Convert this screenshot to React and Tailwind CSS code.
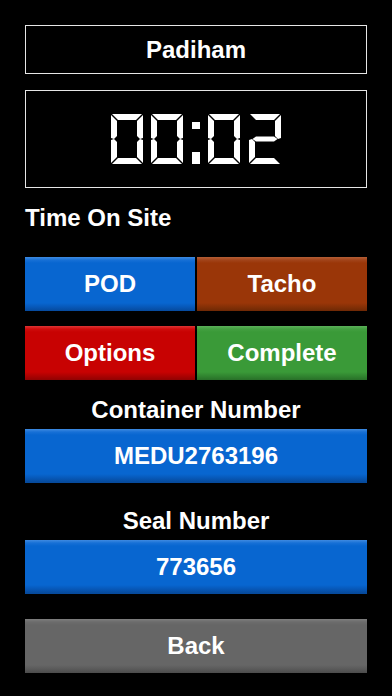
import React from "react";

const SEG = {
  a: "1,0 31,0 25,6 7,6",
  b: "32,1 32,24 29,25 26,22 26,7",
  c: "32,26 32,49 26,43 26,28 29,25",
  d: "1,50 31,50 25,44 7,44",
  e: "0,26 3,25 6,28 6,43 0,49",
  f: "0,1 6,7 6,22 3,25 0,24",
  g: "3.5,25 7,22.5 25,22.5 28.5,25 25,27.5 7,27.5",
};

const DIGITS = {
  0: ["a", "b", "c", "d", "e", "f"],
  1: ["b", "c"],
  2: ["a", "b", "g", "e", "d"],
  3: ["a", "b", "g", "c", "d"],
  4: ["f", "g", "b", "c"],
  5: ["a", "f", "g", "c", "d"],
  6: ["a", "f", "g", "e", "c", "d"],
  7: ["a", "b", "c"],
  8: ["a", "b", "c", "d", "e", "f", "g"],
  9: ["a", "b", "c", "d", "f", "g"],
};

function Digit({ d, x }) {
  return (
    <g transform={`translate(${x},0)`}>
      {DIGITS[d].map((s) => (
        <polygon key={s} points={SEG[s]} fill="#ffffff" />
      ))}
    </g>
  );
}

function Clock({ value }) {
  const [m1, m2, , s1, s2] = value.split("");
  return (
    <div className="relative w-[170px] h-[50px]">
      <svg width="170" height="50" viewBox="0 0 170 50" aria-hidden="true" className="block">
        <Digit d={m1} x={0} />
        <Digit d={m2} x={40} />
        <rect x="81" y="8" width="8" height="7" fill="#ffffff" />
        <rect x="81" y="38" width="8" height="12" fill="#ffffff" />
        <Digit d={s1} x={97} />
        <Digit d={s2} x={138} />
      </svg>
      <span className="absolute inset-0 flex items-center justify-center text-[40px] leading-[50px] text-transparent select-none">
        {value}
      </span>
    </div>
  );
}

function Btn({ children, className }) {
  return (
    <div
      className={`h-[54px] flex items-center justify-center text-white font-bold text-[24px] leading-none ${className}`}
    >
      {children}
    </div>
  );
}

export default function App() {
  return (
    <div
      className="w-[392px] h-[696px] bg-black text-white px-[25px] pt-[25px] flex flex-col overflow-hidden"
      style={{ fontFamily: '"Liberation Sans", Arial, sans-serif' }}
    >
      <div className="h-[49px] border-[1.5px] border-[#e6e6e6] flex items-center justify-center">
        <span className="text-[24px] font-bold leading-none">Padiham</span>
      </div>
      <div className="mt-[16px] h-[98px] border-[1.5px] border-[#e6e6e6] flex items-center justify-center">
        <Clock value="00:02" />
      </div>
      <div className="mt-[16px] h-[28px] leading-[28px] text-[24px] font-bold">Time On Site</div>

      <div className="mt-[25px] grid grid-cols-2 gap-x-[2px] gap-y-[15px]">
        <Btn className="bg-[linear-gradient(to_bottom,#3f8ae0_0px,#1770d6_3px,#0866d0_6px,#0866d0_46px,#0758b8_50px,#064a9c_54px)]">
          POD
        </Btn>
        <Btn className="bg-[linear-gradient(to_bottom,#b45e36_0px,#a2441a_3px,#9a3608_6px,#9a3608_46px,#843006_50px,#6e2805_54px)]">
          Tacho
        </Btn>
        <Btn className="bg-[linear-gradient(to_bottom,#dc3434_0px,#cf0c0c_3px,#c80202_6px,#c80202_46px,#ac0202_50px,#900202_54px)]">
          Options
        </Btn>
        <Btn className="bg-[linear-gradient(to_bottom,#5cb05a_0px,#43a041_3px,#3a9a38_6px,#3a9a38_46px,#318530_50px,#286f28_54px)]">
          Complete
        </Btn>
      </div>

      <div className="mt-[16px] h-[28px] leading-[28px] text-[24px] font-bold text-center">Container Number</div>
      <Btn className="mt-[5px] h-[53px] bg-[linear-gradient(to_bottom,#3f8ae0_0px,#1770d6_3px,#0866d0_6px,#0866d0_45px,#0758b8_49px,#064a9c_53px)]">
        MEDU2763196
      </Btn>

      <div className="mt-[24px] h-[28px] leading-[28px] text-[24px] font-bold text-center">Seal Number</div>
      <Btn className="mt-[5px] h-[53px] bg-[linear-gradient(to_bottom,#3f8ae0_0px,#1770d6_3px,#0866d0_6px,#0866d0_45px,#0758b8_49px,#064a9c_53px)]">
        773656
      </Btn>

      <Btn className="mt-[25px] bg-[linear-gradient(to_bottom,#7e7e7e_0px,#6c6c6c_3px,#666666_6px,#666666_46px,#5a5a5a_50px,#4c4c4c_54px)]">
        Back
      </Btn>
    </div>
  );
}
